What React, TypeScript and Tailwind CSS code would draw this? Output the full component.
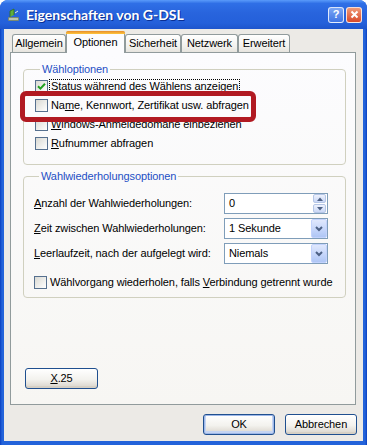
import React from "react";

function Check({ checked }: { checked?: boolean }) {
  return (
    <span className="w-[13px] h-[13px] shrink-0 border border-[#56708F] bg-[linear-gradient(135deg,#D9D9D3,#FFFFFF)] flex items-center justify-center">
      {checked && (
        <svg width="9" height="9" viewBox="0 0 9 9">
          <path d="M1 4.2 L3.4 6.6 L8 1.8" stroke="#21A121" strokeWidth="2" fill="none" />
        </svg>
      )}
    </span>
  );
}

function CheckRow({ checked, children, focus }: { checked?: boolean; children: React.ReactNode; focus?: boolean }) {
  return (
    <div className="h-[19px] flex items-center">
      <Check checked={checked} />
      <span className={"ml-[1px] leading-[13px] px-[1px] " + (focus ? "border border-dotted border-black" : "border border-transparent")}>
        {children}
      </span>
    </div>
  );
}

function Combo({ value }: { value: string }) {
  return (
    <div className="w-[104px] h-[21px] border border-[#7F9DB9] bg-white flex items-center">
      <span className="flex-1 pl-[4px]">{value}</span>
      <span className="w-[16px] h-[19px] rounded-[2px] border border-[#C3D3FD] bg-[linear-gradient(#E0E8FD,#C3D4FA_60%,#AFC6F5)] flex items-center justify-center">
        <svg width="8" height="6" viewBox="0 0 8 6">
          <path d="M1 1 L4 4 L7 1" stroke="#4D6185" strokeWidth="2" fill="none" />
        </svg>
      </span>
    </div>
  );
}

function Spinner({ value }: { value: string }) {
  return (
    <div className="w-[104px] h-[21px] border border-[#7F9DB9] bg-white flex items-center">
      <span className="flex-1 pl-[4px]">{value}</span>
      <span className="w-[13px] h-[19px] mr-[1px] flex flex-col gap-[1px]">
        <span className="flex-1 rounded-[2px] border border-[#B5C6E6] bg-[linear-gradient(#EEF2FD,#C9D7F6)] flex items-center justify-center">
          <svg width="6" height="4" viewBox="0 0 6 4">
            <path d="M0 4 L3 0.5 L6 4 Z" fill="#4D6185" />
          </svg>
        </span>
        <span className="flex-1 rounded-[2px] border border-[#B5C6E6] bg-[linear-gradient(#EEF2FD,#C9D7F6)] flex items-center justify-center">
          <svg width="6" height="4" viewBox="0 0 6 4">
            <path d="M0 0 L3 3.5 L6 0 Z" fill="#4D6185" />
          </svg>
        </span>
      </span>
    </div>
  );
}

function XPButton({ children, def, className }: { children: React.ReactNode; def?: boolean; className?: string }) {
  return (
    <div
      className={
        "w-[72px] h-[21px] rounded-[3px] border border-[#1F4F8F] bg-[linear-gradient(#FFFFFF,#F3F2EE_55%,#D8D3CA)] flex items-center justify-center " +
        (def ? "shadow-[inset_0_0_0_1px_#9DB7E8,inset_0_-1px_0_2px_#C4D4F2] " : "shadow-[inset_0_-2px_0_#D6D0C5] ") +
        (className || "")
      }
    >
      {children}
    </div>
  );
}

function Tab({ label, selected, w }: { label: string; selected?: boolean; w: string }) {
  if (selected) {
    return (
      <div className={"relative z-10 h-[22px] " + w + " border-x border-[#919B9C] bg-[#FCFCFE] rounded-t-[3px] flex flex-col"}>
        <div className="h-[3px] rounded-t-[2px] bg-[linear-gradient(#E68B2C,#FFC73C)] -mx-[1px]" />
        <div className="flex-1 flex items-center justify-center pb-[2px]">{label}</div>
      </div>
    );
  }
  return (
    <div className={"h-[18px] mb-[1px] " + w + " border border-b-0 border-[#919B9C] rounded-t-[3px] bg-[linear-gradient(#FFFFFF,#F1F0EC_70%,#E6E4DE)] flex items-center justify-center"}>
      {label}
    </div>
  );
}

export default function App() {
  return (
    <div className="w-[367px] h-[445px] relative flex flex-col bg-[linear-gradient(90deg,#0A3FC0,#2363DA_2px,#2363DA_calc(100%-2px),#0A3FC0)] rounded-t-[8px] overflow-hidden font-['Liberation_Sans',Arial,sans-serif] text-[11px] tracking-[-0.1px] text-black">
      {/* title bar */}
      <div className="h-[29px] shrink-0 flex items-center pl-[7px] pr-[5px] bg-[linear-gradient(#5A9BFA,#2F6FE6_12%,#2864DD_45%,#2460DA_80%,#1E55CC)]">
        <svg width="13" height="14" viewBox="0 0 13 14">
          <rect x="1" y="9" width="11" height="4" rx="1" fill="#7A8A74" />
          <path d="M3 9 L3 3 L7 1 L7 7" fill="#5FAE3C" stroke="#2F6B1E" strokeWidth="0.8" />
          <rect x="2" y="10" width="9" height="2" fill="#B9C4B2" />
          <path d="M8 5 L11 3" stroke="#E7F0D8" strokeWidth="1" />
        </svg>
        <span className="ml-[6px] text-white font-bold text-[14px] tracking-normal font-['Lato',sans-serif] [text-shadow:1px_1px_0_#0A2F94]">
          Eigenschaften von G-DSL
        </span>
        <div className="flex-1" />
        <div className="w-[16px] h-[16px] rounded-[3px] border border-white/80 bg-[linear-gradient(#7CA6F4,#3F74E4)] text-white font-bold text-[11px] flex items-center justify-center leading-none">
          ?
        </div>
        <div className="ml-[2px] w-[16px] h-[16px] rounded-[3px] border border-white/80 bg-[linear-gradient(#F09A78,#D8492A)] flex items-center justify-center">
          <svg width="9" height="9" viewBox="0 0 9 9">
            <path d="M1.5 1.5 L7.5 7.5 M7.5 1.5 L1.5 7.5" stroke="white" strokeWidth="2" />
          </svg>
        </div>
      </div>

      {/* frame body */}
      <div className="flex-1 mx-[4px] mb-[4px] bg-[#ECEAE6] flex flex-col">
        {/* tabs */}
        <div className="h-[24px] -mb-[1px] flex items-end pl-[8px]">
          <Tab label="Allgemein" w="w-[54px]" />
          <Tab label="Optionen" selected w="w-[59px]" />
          <Tab label="Sicherheit" w="w-[56px]" />
          <Tab label="Netzwerk" w="w-[57px]" />
          <Tab label="Erweitert" w="w-[52px]" />
        </div>

        {/* panel */}
        <div className="ml-[6px] w-[346px] h-[353px] border border-[#919B9C] bg-[linear-gradient(#FCFCFE,#F7F6F3)] flex flex-col pl-[12px]">
          <fieldset className="mt-[10px] w-[323px] h-[102px] border border-[#D0D0BF] rounded-[4px] pl-[11px] pt-[1px]">
            <legend className="ml-[5px] px-[2px] text-[#1E4FC4] leading-[13px]">Wähloptionen</legend>
            <CheckRow checked focus>
              Status während des Wählens anzeigen
            </CheckRow>
            <CheckRow>
              Na<u>m</u>e, Kennwort, Zertifikat usw. abfragen
            </CheckRow>
            <CheckRow>
              <u>W</u>indows-Anmeldedomäne einbeziehen
            </CheckRow>
            <CheckRow>
              <u>R</u>ufnummer abfragen
            </CheckRow>
          </fieldset>

          <fieldset className="mt-[5px] w-[323px] h-[128px] border border-[#D0D0BF] rounded-[4px] pl-[10px] pt-[10px]">
            <legend className="ml-[5px] px-[2px] text-[#1E4FC4] leading-[13px]">Wahlwiederholungsoptionen</legend>
            <div className="flex items-center h-[21px]">
              <span className="w-[190px]">
                <u>A</u>nzahl der Wahlwiederholungen:
              </span>
              <Spinner value="0" />
            </div>
            <div className="flex items-center h-[21px] mt-[4px]">
              <span className="w-[190px]">
                <u>Z</u>eit zwischen Wahlwiederholungen:
              </span>
              <Combo value="1 Sekunde" />
            </div>
            <div className="flex items-center h-[21px] mt-[4px]">
              <span className="w-[190px]">
                <u>L</u>eerlaufzeit, nach der aufgelegt wird:
              </span>
              <Combo value="Niemals" />
            </div>
            <div className="mt-[9px]">
              <CheckRow>
                Wählvorgang wiederholen, falls <u>V</u>erbindung getrennt wurde
              </CheckRow>
            </div>
          </fieldset>

          <XPButton className="mt-[70px] ml-[2px] w-[73px]">
            <span>
              <u>X</u>.25
            </span>
          </XPButton>
        </div>

        {/* bottom buttons */}
        <div className="mt-[9px] flex justify-end gap-[10px] pr-[6px]">
          <XPButton def>OK</XPButton>
          <XPButton>Abbrechen</XPButton>
        </div>
      </div>

      {/* red annotation */}
      <div className="absolute left-[20px] top-[91px] w-[236px] h-[31px] border-[5px] border-[#B11A22] rounded-[6px]" />
    </div>
  );
}
